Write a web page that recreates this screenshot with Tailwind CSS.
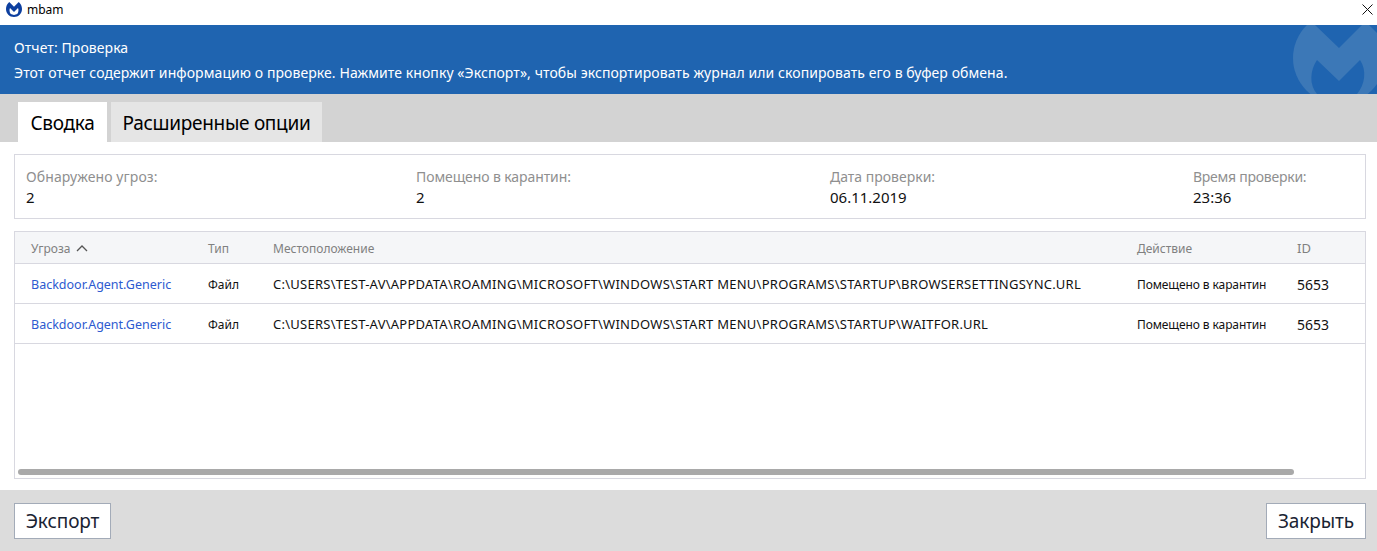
<!DOCTYPE html>
<html lang="ru">
<head>
    <meta charset="UTF-8">
    <title>mbam</title>
    <script src="https://cdn.jsdelivr.net/npm/@tailwindcss/browser@4"></script>
</head>
<body class="bg-white font-['Noto_Sans',sans-serif] text-black overflow-hidden">
<div class="w-[1377px] h-[551px] flex flex-col">

    <!-- Title bar -->
    <div class="h-[25px] flex items-center pl-[6px] pr-[4px] pb-[6px]">
        <svg class="w-[16px] h-[15px]" viewBox="0 0 32 30">
            <path fill="#0d3f9f" d="M16 30C7 30 0 23 0 14 0 8 2.500 3.500 6.500 0L16 9.500 25.500 0C29.500 3.500 32 8 32 14 32 23 25 30 16 30Z"/>
            <path fill="#fff" d="M8 12 16 20 24 12C25.500 15 25.500 20 22.500 24L16 26 9.500 24C6.500 20 6.500 15 8 12Z"/>
        </svg>
        <span class="ml-[5px] text-[12px]">mbam</span>
        <svg class="ml-auto w-[11px] h-[11px]" viewBox="0 0 11 11" stroke="#111" stroke-width="1" fill="none"><path d="M0.500 0.500 10.500 10.500M10.500 0.500 0.500 10.500"/></svg>
    </div>

    <!-- Blue header -->
    <div class="relative h-[69px] bg-[#1f64b0] text-white text-[14px] tracking-[0.08px] pl-[14px] overflow-hidden">
        <p class="pt-[13px] leading-[20px]">Отчет: Проверка</p>
        <p class="mt-[5px] leading-[20px]">Этот отчет содержит информацию о проверке. Нажмите кнопку «Экспорт», чтобы экспортировать журнал или скопировать его в буфер обмена.</p>
        <svg class="absolute left-[1293px] top-0 w-[84px] h-[69px]" viewBox="0 0 84 69">
            <circle cx="46" cy="33" r="46" fill="#3c78b7"/>
            <path fill="#1f64b0" d="M22 0 46 23 69 0ZM24 35 46 56 67 35C74 45 72 60 64 69H24C16 60 17 45 24 35ZM76 0H84V8Z"/>
        </svg>
    </div>

    <!-- Tabs -->
    <div class="h-[48px] bg-[#d3d3d3] flex items-end pl-[18px] gap-[4px] text-[19px] tracking-[-0.3px]">
        <div class="h-[40px] w-[89px] bg-white flex items-center justify-center pt-[2px]">Сводка</div>
        <div class="h-[40px] w-[211px] bg-[#e5e5e5] flex items-center justify-center pt-[2px]">Расширенные опции</div>
    </div>

    <!-- Content -->
    <div class="h-[348px] pl-[14px] pr-[11px] pt-[12px]">
        <div class="h-[65px] border border-[#d8d8e0] flex pl-[11px] pt-[12px] text-[14px] leading-[20px]">
            <div class="w-[390px]"><p class="text-[#8f8f8f] tracking-[0.1px]">Обнаружено угроз:</p><p class="text-[15px] text-[#111]">2</p></div>
            <div class="w-[414px]"><p class="text-[#8f8f8f] tracking-[-0.1px]">Помещено в карантин:</p><p class="text-[15px] text-[#111]">2</p></div>
            <div class="w-[363px]"><p class="text-[#8f8f8f]">Дата проверки:</p><p class="text-[15px] text-[#111]">06.11.2019</p></div>
            <div><p class="text-[#8f8f8f] tracking-[-0.25px]">Время проверки:</p><p class="text-[15px] text-[#111]">23:36</p></div>
        </div>

        <div class="relative mt-[12px] h-[248px] border border-[#d8d8e0] text-[12px]">
            <div class="h-[32px] bg-[#f5f6f8] border-b border-[#d8d8e0] grid grid-cols-[177px_65px_864px_160px_1fr] pl-[16px] pt-[2px] items-center text-[#808080]">
                <div class="flex items-center gap-[6px]">Угроза
                    <svg class="w-[12px] h-[7px]" viewBox="0 0 12 7" fill="none" stroke="#555" stroke-width="1.300"><path d="M1 6 6 1 11 6"/></svg>
                </div>
                <div>Тип</div>
                <div>Местоположение</div>
                <div>Действие</div>
                <div class="text-[13px]">ID</div>
            </div>
            <div class="h-[40px] border-b border-[#d8d8e0] grid grid-cols-[177px_65px_864px_160px_1fr] pl-[16px] items-center pt-[2px] text-[#111]">
                <div class="text-[12.500px] pt-[1px] text-[#2d5ad0]">Backdoor.Agent.Generic</div>
                <div>Файл</div>
                <div class="text-[13px] tracking-[0.260px] whitespace-nowrap">C:\USERS\TEST-AV\APPDATA\ROAMING\MICROSOFT\WINDOWS\START MENU\PROGRAMS\STARTUP\BROWSERSETTINGSYNC.URL</div>
                <div class="tracking-[-0.1px]">Помещено в карантин</div>
                <div class="text-[14px] pb-[1px]">5653</div>
            </div>
            <div class="h-[40px] border-b border-[#d8d8e0] grid grid-cols-[177px_65px_864px_160px_1fr] pl-[16px] items-center pt-[2px] text-[#111]">
                <div class="text-[12.500px] pt-[1px] text-[#2d5ad0]">Backdoor.Agent.Generic</div>
                <div>Файл</div>
                <div class="text-[13px] tracking-[0.260px] whitespace-nowrap">C:\USERS\TEST-AV\APPDATA\ROAMING\MICROSOFT\WINDOWS\START MENU\PROGRAMS\STARTUP\WAITFOR.URL</div>
                <div class="tracking-[-0.1px]">Помещено в карантин</div>
                <div class="text-[14px] pb-[1px]">5653</div>
            </div>
            <div class="absolute left-[3px] top-[237px] w-[1276px] h-[6px] rounded-full bg-[#a9a9a9]"></div>
        </div>
    </div>

    <!-- Footer -->
    <div class="flex-1 bg-[#dcdcdc] flex items-start justify-between pl-[14px] pr-[11px] pt-[13px] text-[19px] tracking-[-0.1px]">
        <div class="w-[97px] h-[36px] bg-white border border-[#a3abb8] flex items-center justify-center text-[#1a2433]">Экспорт</div>
        <div class="w-[100px] h-[36px] bg-white border border-[#a3abb8] flex items-center justify-center text-[#1a2433]">Закрыть</div>
    </div>
</div>
</body>
</html>
